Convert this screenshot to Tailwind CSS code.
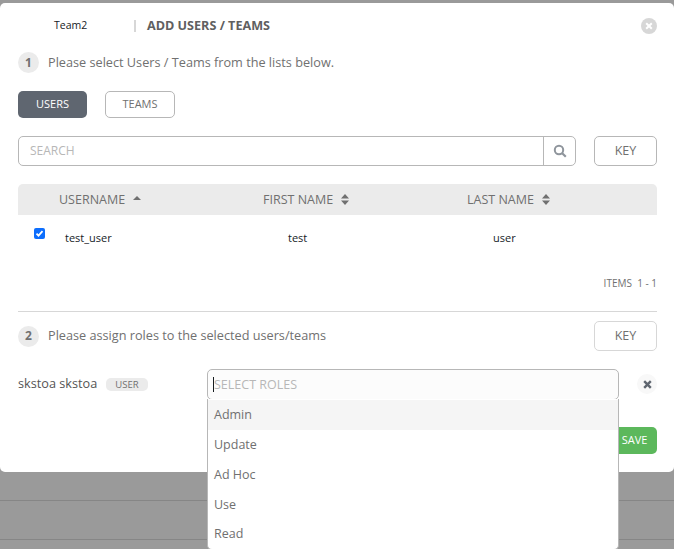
<!DOCTYPE html>
<html lang="en">
<head>
    <meta charset="UTF-8">
    <title>Add Users / Teams</title>
    <script src="https://cdn.jsdelivr.net/npm/@tailwindcss/browser@4"></script>
</head>
<body class="bg-[#9a9a9a] h-[549px] w-[674px] overflow-hidden font-['Open_Sans',sans-serif] text-[#707070]">

    <!-- modal -->
    <div class="relative mt-[3px] h-[469px] bg-white rounded-[5px] pl-[18px] pr-[17px]">
        <div class="flex items-center h-[44px] pt-[1px]">
            <span class="w-[116px] pl-[36px] text-[10.5px] text-[#161b1f]">Team2</span>
            <span class="h-[12px] w-[2px] bg-[#d7d7d7]"></span>
            <span class="ml-[11px] pt-[1px] text-[12.6px] font-bold text-[#606060]">ADD USERS / TEAMS</span>
            <button class="ml-auto w-[16px] h-[16px] rounded-full bg-[#d7d7d7] flex items-center justify-center">
                <svg width="8" height="8" viewBox="0 0 8 8"><path d="M1.2 1.2l5.6 5.6M6.8 1.2L1.2 6.8" stroke="#fff" stroke-width="2"/></svg>
            </button>
        </div>

        <div class="flex items-center h-[21px] mt-[5px] text-[12.7px]">
            <span class="w-[21px] h-[21px] rounded-full bg-[#ebebeb] flex items-center justify-center font-bold text-[12px] text-[#707070]">1</span>
            <span class="ml-[9px] pt-[1px]">Please select Users / Teams from the lists below.</span>
        </div>

        <div class="flex gap-[18px] mt-[18px]">
            <button class="w-[69px] h-[27px] rounded-[5px] bg-[#5f6670] text-white text-[11px]">USERS</button>
            <button class="w-[70px] h-[27px] rounded-[5px] border border-[#b7b7b7] text-[#707070] text-[11px]">TEAMS</button>
        </div>

        <div class="flex mt-[18px]">
            <div class="flex w-[558px] h-[30px] border border-[#b7b7b7] rounded-[5px]">
                <span class="flex-1 pl-[11px] leading-[28px] text-[12px] text-[#b7b7b7]">SEARCH</span>
                <span class="w-[32px] border-l border-[#b7b7b7] flex items-center justify-center">
                    <svg width="14" height="14" viewBox="0 0 14 14" fill="none"><circle cx="6" cy="6" r="4.2" stroke="#8f959c" stroke-width="2"/><path d="M9.2 9.2l3.6 3.6" stroke="#8f959c" stroke-width="2.2"/></svg>
                </span>
            </div>
            <button class="ml-auto w-[63px] h-[30px] border border-[#b7b7b7] rounded-[5px] text-[12.5px]">KEY</button>
        </div>

        <!-- users table -->
        <div class="flex items-center mt-[18px] h-[31px] pt-[1px] bg-[#ebebeb] rounded-t-[5px] text-[12.5px] text-[#707070]">
            <div class="w-[204px] pl-[41px] flex items-center gap-[8px]">USERNAME
                <svg width="8" height="4" viewBox="0 0 8 4" class="mb-[5px]"><path d="M4 0l4 4H0z" fill="#707070"/></svg>
            </div>
            <div class="w-[204px] pl-[41px] flex items-center gap-[8px] whitespace-nowrap">FIRST NAME
                <svg width="8" height="11" viewBox="0 0 8 11" class="mb-[1px]"><path d="M4 0l4 4.4H0zM4 11l4-4.4H0z" fill="#707070"/></svg>
            </div>
            <div class="pl-[41px] flex items-center gap-[8px]">LAST NAME
                <svg width="8" height="11" viewBox="0 0 8 11" class="mb-[1px]"><path d="M4 0l4 4.4H0zM4 11l4-4.4H0z" fill="#707070"/></svg>
            </div>
        </div>
        <div class="flex h-[46px] text-[11px] text-[#161b1f]">
            <div class="w-[204px] flex">
                <span class="mt-[13px] ml-[16px] w-[11px] h-[11px] rounded-[2px] bg-[#0d6efd] flex items-center justify-center">
                    <svg width="9" height="9" viewBox="0 0 9 9" fill="none"><path d="M1.5 4.6l2 2 4-4.4" stroke="#fff" stroke-width="1.8"/></svg>
                </span>
                <span class="ml-[20px] mt-[15px]">test_user</span>
            </div>
            <div class="w-[204px] pl-[66px] pt-[15px]">test</div>
            <div class="pl-[67px] pt-[15px]">user</div>
        </div>
        <div class="flex justify-end mt-[15px] text-[10px] text-[#707070]">ITEMS&nbsp; 1 - 1</div>

        <div class="mt-[20px] border-t border-[#d7d7d7]"></div>

        <div class="flex items-center mt-[9px]">
            <span class="w-[21px] h-[21px] rounded-full bg-[#ebebeb] flex items-center justify-center font-bold text-[12px] text-[#707070]">2</span>
            <span class="ml-[9px] text-[12.7px]">Please assign roles to the selected users/teams</span>
            <button class="ml-auto w-[63px] h-[30px] border border-[#d7d7d7] rounded-[5px] text-[12.5px]">KEY</button>
        </div>

        <!-- role row -->
        <div class="flex items-center mt-[18px] h-[30px]">
            <span class="w-[88px] text-[12.7px] text-[#555]">skstoa skstoa</span>
            <span class="h-[13px] w-[42px] rounded-[5px] bg-[#ebebeb] text-[9.5px] leading-[14px] text-center">USER</span>
            <div class="relative ml-[59px] w-[412px] h-[31px] border border-[#b7b7b7] rounded-[5px] bg-[#fcfcfc] flex items-center pl-[5px] text-[12.5px] text-[#b7b7b7]">
                <span class="h-[15px] w-px bg-[#161b1f]"></span><span class="pt-[2px]">SELECT ROLES</span>
            </div>
            <button class="ml-auto w-[20px] h-[20px] rounded-full bg-[#f8f8f8] flex items-center justify-center">
                <svg width="9" height="9" viewBox="0 0 9 9"><path d="M1.2 1.2l6.6 6.6M7.8 1.2L1.2 7.8" stroke="#5f6670" stroke-width="2.4"/></svg>
            </button>
        </div>

        <div class="flex justify-end mt-[28px]">
            <button class="w-[80px] h-[27px] rounded-[5px] bg-[#5cb85c] text-white text-[11px] font-medium pl-[35px]">SAVE</button>
        </div>

        <!-- dropdown open over the footer -->
        <ul class="absolute z-10 left-[207px] top-[396px] w-[412px] h-[151px] bg-white border border-t-0 border-[#b7b7b7] rounded-b-[5px] text-[12.5px] text-[#707070]">
            <li class="h-[30px] leading-[29px] mt-px pl-[6px] bg-[#f5f5f5]">Admin</li>
            <li class="h-[30px] leading-[30px] pl-[6px]">Update</li>
            <li class="h-[30px] leading-[30px] pl-[6px]">Ad Hoc</li>
            <li class="h-[30px] leading-[30px] pl-[6px]">Use</li>
            <li class="h-[28px] leading-[28px] pl-[6px]">Read</li>
        </ul>
    </div>

    <!-- page behind the modal -->
    <div class="h-[29px] border-b border-[#868686]"></div>
    <div class="h-[39px] border-b border-[#868686]"></div>
</body>
</html>
